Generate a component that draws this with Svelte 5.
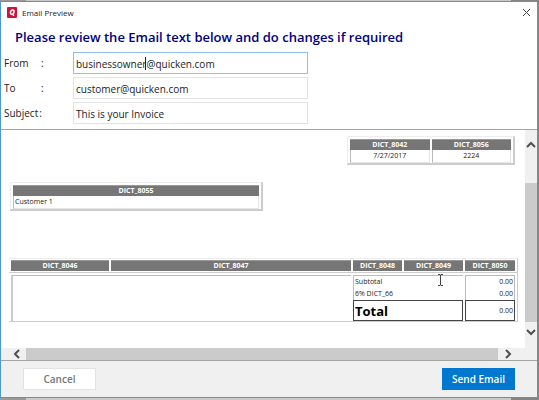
<script lang="ts">
  let fields = $state([
    { id: 'from', label: 'From', gap: 'wide', value: 'businessowner@quicken.com', active: true },
    { id: 'to', label: 'To', gap: 'wide', value: 'customer@quicken.com', active: false },
    { id: 'subject', label: 'Subject', gap: 'tight', value: 'This is your Invoice', active: false },
  ]);

  const columns = ['DICT_8046', 'DICT_8047', 'DICT_8048', 'DICT_8049', 'DICT_8050'];
</script>

<div class="desktop">
  <div class="window" role="dialog" aria-labelledby="window-title">
    <header class="titlebar">
      <svg class="logo" viewBox="0 0 10 11" aria-hidden="true">
        <rect width="10" height="11" rx="1" fill="#d3123a" />
        <ellipse cx="5.2" cy="5.2" rx="1.7" ry="2.3" transform="rotate(18 5.2 5.2)" fill="none" stroke="#fff" stroke-width="1.5" />
        <path d="M4.8 6.6L7 8.7" stroke="#fff" stroke-width="1.3" />
      </svg>
      <span id="window-title">Email Preview</span>
      <button class="close" aria-label="Close">
        <svg viewBox="0 0 9 9" aria-hidden="true"><path d="M1 1l7 7M8 1l-7 7" /></svg>
      </button>
    </header>

    <h1>Please review the Email text below and do changes if required</h1>

    <form class="fields">
      {#each fields as field}
        <div class="field">
          <label for={field.id} class={field.gap}><span>{field.label}</span><span>:</span></label>
          <div class="box">
            <input id={field.id} type="text" class:active={field.active} bind:value={field.value} />
            {#if field.active}<span class="caret"></span>{/if}
          </div>
        </div>
      {/each}
    </form>

    <div class="preview">
      <div class="page">
        <table class="panel meta">
          <thead><tr><th>DICT_8042</th><th>DICT_8056</th></tr></thead>
          <tbody><tr><td>7/27/2017</td><td>2224</td></tr></tbody>
        </table>

        <table class="panel customer">
          <thead><tr><th>DICT_8055</th></tr></thead>
          <tbody><tr><td>Customer 1</td></tr></tbody>
        </table>

        <table class="panel items">
          <colgroup><col class="c1" /><col /><col class="c3" /><col class="c4" /><col class="c5" /></colgroup>
          <thead>
            <tr>{#each columns as column}<th>{column}</th>{/each}</tr>
          </thead>
        </table>
        <table class="panel items totals">
          <colgroup><col class="c1" /><col /><col class="c3" /><col class="c4" /><col class="c5" /></colgroup>
          <tbody>
            <tr>
              <td class="blank" colspan="2" rowspan="3"></td>
              <td class="first" colspan="2">Subtotal</td>
              <td class="amount first">0.00</td>
            </tr>
            <tr><td colspan="2">6% DICT_66</td><td class="amount">0.00</td></tr>
            <tr class="total"><td colspan="2">Total</td><td class="amount">0.00</td></tr>
          </tbody>
        </table>

        <svg class="ibeam" viewBox="0 0 7 12" aria-hidden="true">
          <path d="M1 .5h2l.5.5.5-.5h2M3.500 1v10M1 11.500h2l.5-.5.5.5h2" />
        </svg>
      </div>

      <div class="scroll vertical">
        <button aria-label="Scroll up"><svg viewBox="0 0 10 10"><path d="M1 7l4-4 4 4" /></svg></button>
        <div class="thumb"></div>
        <button aria-label="Scroll down"><svg viewBox="0 0 10 10"><path d="M1 3l4 4 4-4" /></svg></button>
      </div>
      <div class="scroll horizontal">
        <button class="back" aria-label="Scroll left"><svg viewBox="0 0 10 10"><path d="M7 1L3 5l4 4" /></svg></button>
        <div class="thumb"></div>
        <button aria-label="Scroll right"><svg viewBox="0 0 10 10"><path d="M3 1l4 4-4 4" /></svg></button>
      </div>
      <div class="corner"></div>
    </div>

    <footer>
      <button class="cancel">Cancel</button>
      <button class="send">Send Email</button>
    </footer>
  </div>
</div>

<style>
  :global(body) {
    margin: 0;
    background: #c9c9c9;
  }

  .desktop {
    padding: 1px 1px 3px 0;
    background: linear-gradient(90deg, #9a9a9a 26px, #c9c9c9 26px, #c9c9c9 calc(100% - 28px), #858585 calc(100% - 28px));
    font-family: "Open Sans", "Noto Sans", sans-serif;
    font-size: 10px;
    color: #222;
  }

  .window {
    border: 1px solid #4c98cf;
    background: #fff;
  }

  button {
    font-family: inherit;
    padding: 0;
    border: 0;
    background: none;
  }

  .titlebar {
    display: flex;
    align-items: center;
    height: 21px;
    padding: 0 6px;
    font-size: 8px;
  }

  .logo {
    width: 10px;
    height: 11px;
    margin-right: 5px;
  }

  .close {
    display: flex;
    margin-left: auto;
  }

  .close svg {
    width: 9px;
    height: 9px;
    fill: none;
    stroke: #444;
  }

  h1 {
    margin: 0;
    padding: 4px 14px 5px;
    font-size: 13px;
    font-weight: 600;
    line-height: 20px;
    color: #000080;
    white-space: nowrap;
  }

  .fields {
    display: flex;
    flex-direction: column;
    gap: 3px;
    padding: 0 0 5px 3px;
  }

  .field {
    display: flex;
    align-items: center;
  }

  label {
    display: flex;
    width: 69px;
  }

  label span:first-child {
    width: 37px;
  }

  .tight span:first-child {
    width: auto;
    margin-right: 1px;
  }

  .box {
    position: relative;
    width: 44%;
  }

  input {
    display: block;
    box-sizing: border-box;
    width: 100%;
    height: 22px;
    padding: 1px 2px 0;
    border: 1px solid #e3e3e3;
    outline: 0;
    font: inherit;
    color: #222;
  }

  input.active {
    border-color: #8fc0ee;
  }

  .caret {
    position: absolute;
    top: 5px;
    left: 72px;
    width: 1px;
    height: 13px;
    background: #222;
  }

  .preview {
    display: grid;
    grid-template-columns: 1fr 12px;
    border-top: 1px solid #a3a3a3;
    border-bottom: 1px solid #a3a3a3;
  }

  .page {
    position: relative;
    padding: 6px 7px 26px 8px;
    font-size: 7px;
    line-height: 10px;
    color: #222;
  }

  .panel {
    border: 1px solid #ededed;
    border-right: 2px solid #ccc;
    border-bottom: 2px solid #ccc;
    border-collapse: separate;
    border-spacing: 2px 0;
    table-layout: fixed;
  }

  .panel th {
    height: 10px;
    padding: 0;
    border: 1px solid #9a9a9a;
    border-width: 1px 0 0;
    background: #767676;
    color: #fff;
  }

  .panel td {
    height: 10px;
    padding: 1px;
    border: 1px solid #e6e6e6;
    border-left-color: #bbb;
    border-top: 0;
  }

  .meta {
    width: 168px;
    margin: 0 3px 0 auto;
    padding-top: 2px;
    text-align: center;
  }

  .customer {
    width: 253px;
    margin: 17px 0 47px 1px;
    padding-top: 2px;
  }

  .items {
    width: 100%;
    padding-top: 1px;
    border-width: 1px 1px 1px 0;
  }

  .c1 { width: 98px; }
  .c3 { width: 49px; }
  .c4 { width: 59px; }
  .c5 { width: 50px; }

  .items th {
    border-bottom: 1px solid #fff;
  }

  .totals {
    border-top: 0;
    padding-top: 2px;
  }

  .totals td {
    border-right: 0;
    border-bottom: 0;
  }

  .totals .blank {
    border-top: 1px solid #bbb;
    border-left: 2px solid #ccc;
  }

  .totals .first {
    border-top: 1px solid #bbb;
  }

  .totals td.amount {
    text-align: right;
    border-right: 1px solid #bbb;
  }

  .totals .total td {
    height: 17px;
    border: 1px solid #444;
  }

  .total td:first-child {
    color: #000;
    font-size: 13px;
    font-weight: bold;
  }

  .ibeam {
    position: absolute;
    top: 144px;
    left: 436px;
    width: 7px;
    height: 12px;
    fill: none;
    stroke: #444;
  }

  .scroll {
    display: flex;
    background: #f0f0f0;
  }

  .scroll svg {
    display: block;
    width: 10px;
    height: 10px;
    margin: auto;
    fill: none;
    stroke: #505050;
    stroke-width: 2;
  }

  .thumb {
    flex: 1;
    background: #cbcbcb;
  }

  .vertical {
    flex-direction: column;
    padding: 5px 0 6px;
  }

  .vertical button {
    height: 20px;
  }

  .vertical .thumb {
    margin-top: 28px;
  }

  .horizontal {
    height: 12px;
    padding-right: 7px;
  }

  .horizontal button {
    width: 20px;
  }

  .horizontal .back {
    width: 25px;
    padding-left: 6px;
  }

  .corner {
    background: #f0f0f0;
  }

  footer {
    display: flex;
    justify-content: space-between;
    padding: 7px 22px;
    background: #f0f0f0;
  }

  footer button {
    width: 73px;
    height: 22px;
    border: 1px solid #e2e2e2;
    background: #fff;
    color: #777;
    font-size: 10px;
    font-weight: 600;
  }

  footer .send {
    border-color: #0078d0;
    background: #0078d0;
    color: #fff;
  }
</style>
